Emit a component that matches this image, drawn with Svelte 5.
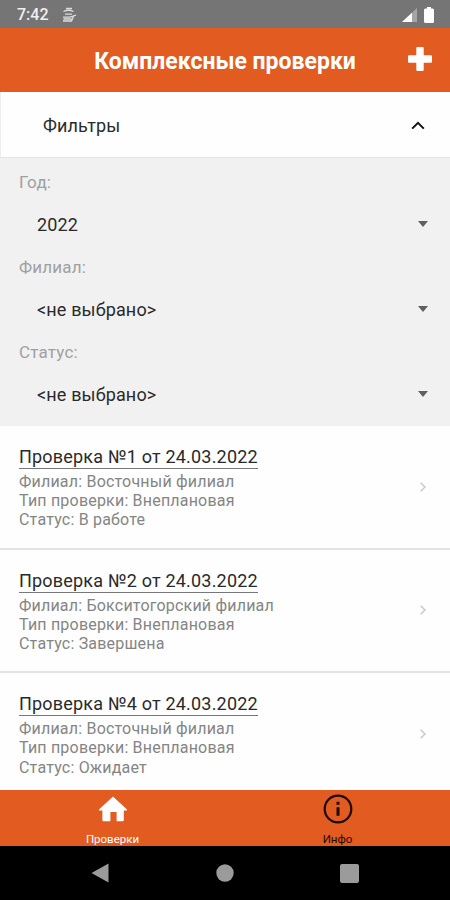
<script>
  const filters = [
    { label: "Год:", value: "2022" },
    { label: "Филиал:", value: "<не выбрано>" },
    { label: "Статус:", value: "<не выбрано>" },
  ];

  const checks = [
    { number: 1, date: "24.03.2022", branch: "Восточный филиал", type: "Внеплановая", status: "В работе" },
    { number: 2, date: "24.03.2022", branch: "Бокситогорский филиал", type: "Внеплановая", status: "Завершена" },
    { number: 4, date: "24.03.2022", branch: "Восточный филиал", type: "Внеплановая", status: "Ожидает" },
  ];

  let open = $state(true);
  let tab = $state("checks");
</script>

<div class="screen">
  <div class="status">
    <span class="status__time">7:42</span>
    <svg class="status__note" width="15" height="16" viewBox="0 0 15 16" fill="none" stroke="#dcdcdc" stroke-width="1.3">
      <path d="M4 1.500h6M1.500 4.500c3-1.500 7-1.500 10 0M3 7.200h7M1 10.200h7l6-2M1 14h8.500l2-4.500M1.500 12h8" />
    </svg>
    <svg class="status__signal" width="15" height="14" viewBox="0 0 15 14">
      <path d="M15 0v14H0z" fill="#a5a5a5" />
      <path d="M10 4.700V14H0z" fill="#fff" />
    </svg>
    <svg width="10" height="16" viewBox="0 0 10 16" fill="#fff">
      <path d="M3 0h4v1.500h1.500Q10 1.500 10 3v11.500Q10 16 8.500 16h-7Q0 16 0 14.500V3Q0 1.500 1.500 1.500H3z" />
    </svg>
  </div>

  <header class="header">
    <h1 class="header__title">Комплексные проверки</h1>
    <button class="header__add" aria-label="Добавить">
      <svg width="24" height="24" viewBox="0 0 24 24" fill="#fff">
        <path d="M9.300 0h5.400q1 0 1 1v7.300H23q1 0 1 1v5.400q0 1-1 1h-7.300V23q0 1-1 1H9.300q-1 0-1-1v-7.300H1q-1 0-1-1V9.300q0-1 1-1h7.300V1q0-1 1-1z" />
      </svg>
    </button>
  </header>

  <button class="toggle" onclick={() => (open = !open)}>
    <span>Фильтры</span>
    <svg class:closed={!open} width="14" height="9" viewBox="0 0 14 9" fill="none" stroke="#111" stroke-width="2">
      <path d="M1.200 7.600 7 1.900l5.800 5.700" />
    </svg>
  </button>

  {#if open}
    <div class="filters">
      {#each filters as filter}
        <div class="filter">
          <div class="filter__label">{filter.label}</div>
          <div class="filter__value">
            <span>{filter.value}</span>
            <svg width="10" height="6" viewBox="0 0 10 6" fill="#606060"><path d="M0 0h10L5 6z" /></svg>
          </div>
        </div>
      {/each}
    </div>
  {/if}

  <main class="list">
    {#each checks as check}
      <article class="check">
        <div>
          <h2 class="check__title">Проверка №{check.number} от {check.date}</h2>
          <p>Филиал: {check.branch}</p>
          <p>Тип проверки: {check.type}</p>
          <p>Статус: {check.status}</p>
        </div>
        <svg width="6" height="10" viewBox="0 0 6 10" fill="none" stroke="#c8c8c8" stroke-width="1.500">
          <path d="M.700.700 5 5 .700 9.300" />
        </svg>
      </article>
    {/each}
  </main>

  <nav class="tabs">
    <button class="tab" class:active={tab === "checks"} onclick={() => (tab = "checks")}>
      <svg width="30" height="30" viewBox="0 0 30 30" fill="currentColor">
        <path d="M15 2.500 29 15.500q.6 1-.5 1h-2.700V26q0 1.200-1.200 1.200h-6V18h-6.200v9.200H5.600q-1.200 0-1.200-1.200v-9.500H1.500q-1.100 0-.5-1z" />
      </svg>
      <span>Проверки</span>
    </button>
    <button class="tab" class:active={tab === "info"} onclick={() => (tab = "info")}>
      <svg width="30" height="30" viewBox="0 0 30 30" fill="none" stroke="currentColor">
        <circle cx="15" cy="15" r="13.300" stroke-width="2.200" />
        <path d="M15 7.700v3M15 13.300v8.500" stroke-width="3" />
      </svg>
      <span>Инфо</span>
    </button>
  </nav>

  <div class="system">
    <svg width="18" height="20" viewBox="0 0 18 20"><path d="M17.500.500v19L.500 10z" /></svg>
    <svg width="18" height="18" viewBox="0 0 18 18"><circle cx="9" cy="9" r="8.700" /></svg>
    <svg width="19" height="19" viewBox="0 0 19 19"><rect width="19" height="19" rx="2" /></svg>
  </div>
</div>

<style>
  :global(body) { margin: 0; }
  .screen {
    display: flex;
    flex-direction: column;
    height: 900px;
    overflow: hidden;
    background: #fefefe;
    color: #2a2a2a;
    font-family: Roboto, "Noto Sans", sans-serif;
  }
  button {
    border: 0;
    padding: 0;
    background: none;
    color: inherit;
    font: inherit;
  }
  h1, h2, p { margin: 0; }
  svg { display: block; flex: none; }
  .status {
    display: flex;
    align-items: center;
    flex: none;
    height: 28px;
    box-sizing: border-box;
    padding: 1px 16px 0 17px;
    background: #757575;
    color: #f0f0f0;
  }
  .status__time {
    width: 32px;
    font-size: 16px;
    font-weight: 500;
  }
  .status__note { margin-left: 13px; }
  .status__signal { margin: 0 7px 0 auto; }
  .header {
    display: grid;
    grid-template-columns: 42px 1fr 42px;
    align-items: center;
    flex: none;
    height: 64px;
    background: #e25b20;
    color: #fff;
  }
  .header__title {
    grid-column: 2;
    padding-top: 3px;
    text-align: center;
    font-size: 23px;
    font-weight: 700;
    line-height: 28px;
    white-space: nowrap;
  }
  .header__add { margin-bottom: 2px; }
  .toggle {
    display: flex;
    align-items: center;
    justify-content: space-between;
    flex: none;
    height: 66px;
    box-sizing: border-box;
    padding: 1px 25px 0 42px;
    border-left: 1px solid #eee;
    border-bottom: 1px solid #e4e4e4;
    font-size: 18px;
    letter-spacing: 0.1px;
  }
  .closed { transform: rotate(180deg); }
  .filters {
    flex: none;
    height: 268px;
    box-sizing: border-box;
    padding: 12px 22px 0 19px;
    background: #f1f1f1;
  }
  .filter { height: 85px; }
  .filter__label {
    color: #a0a0a0;
    font-size: 17px;
    line-height: 24px;
    letter-spacing: 0.2px;
  }
  .filter__value {
    display: flex;
    align-items: center;
    justify-content: space-between;
    height: 60px;
    padding-left: 18px;
    font-size: 18px;
    letter-spacing: 0.15px;
  }
  .list {
    flex: 1;
    min-height: 0;
    overflow: hidden;
  }
  .check {
    display: flex;
    align-items: center;
    justify-content: space-between;
    height: 123.600px;
    box-sizing: border-box;
    padding: 0 24px 0 19px;
    border-bottom: 2px solid #e3e3e3;
    color: #858585;
    font-size: 16px;
    line-height: 19.200px;
    letter-spacing: 0.2px;
  }
  .check__title {
    width: max-content;
    margin-bottom: 3px;
    border-bottom: 1px solid #777;
    color: #2a2a2a;
    font-size: 18px;
    font-weight: 400;
    line-height: 23px;
    letter-spacing: 0.2px;
    padding-top: 1px;
  }
  .tabs {
    display: grid;
    grid-template-columns: 1fr 1fr;
    flex: none;
    height: 56px;
    background: #e25b20;
    color: #1c0b04;
  }
  .tab {
    display: flex;
    flex-direction: column;
    align-items: center;
    padding-top: 4px;
    font-size: 11.500px;
    line-height: 14px;
  }
  .tab span { margin-top: 8px; }
  .active { color: #fff; }
  .system {
    display: flex;
    align-items: center;
    justify-content: space-between;
    flex: none;
    height: 54px;
    padding: 0 91px;
    background: #000;
    fill: #9b9b9b;
  }
</style>
